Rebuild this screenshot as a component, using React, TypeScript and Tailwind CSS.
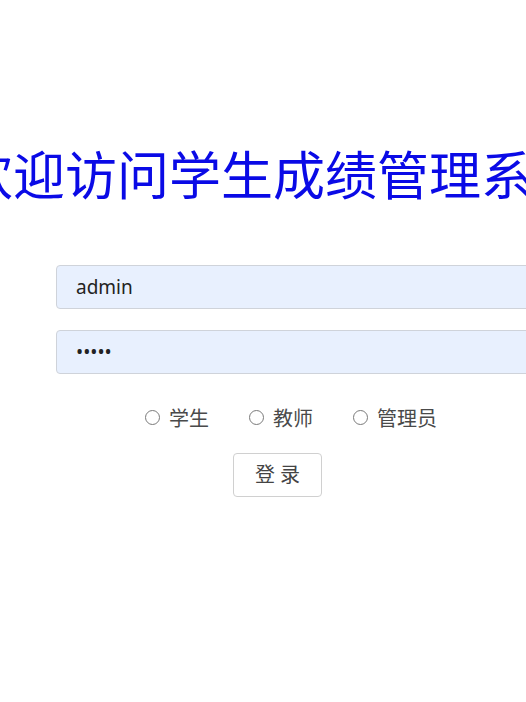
import React from 'react';

const roles = ['学生', '教师', '管理员'];

export default function App() {
  return (
    <div className="w-[526px] h-[702px] overflow-hidden bg-white font-['Noto_Sans','Noto_Sans_CJK_SC',sans-serif]">
      {/* title, wider than the window */}
      <div className="flex justify-center pl-[20px] pt-[149px] whitespace-nowrap">
        <h1 className="text-[52px] leading-[52px] text-[#0a0ae6] shrink-0">欢迎访问学生成绩管理系统</h1>
      </div>

      <form className="flex flex-col mt-[64px]" onSubmit={(e) => e.preventDefault()}>
        <input
          type="text"
          defaultValue="admin"
          className="ml-[56px] w-[520px] h-[44px] shrink-0 rounded-[4px] border border-[#cfd3da] bg-[#e8f0fe] px-[19px] text-[19px] text-[#222] outline-none"
        />
        <input
          type="password"
          defaultValue="admin"
          className="ml-[56px] mt-[21px] w-[520px] h-[44px] shrink-0 rounded-[4px] border border-[#cfd3da] bg-[#e8f0fe] px-[19px] text-[19px] text-[#222] outline-none"
        />

        <div className="flex items-center ml-[145px] mt-[33px] h-[24px] gap-[40px]">
          {roles.map((r) => (
            <label key={r} className="flex items-center gap-[9px] text-[20px] leading-none text-[#4a4a4a]">
              <span className="w-[15px] h-[15px] rounded-full border border-[#7a7a7a] bg-white -mt-[3px]" />
              {r}
            </label>
          ))}
        </div>

        <button
          type="submit"
          className="ml-[233px] mt-[22px] w-[89px] h-[44px] rounded-[4px] border border-[#d0d0d0] bg-white text-[20px] text-[#444]"
        >
          登 录
        </button>
      </form>
    </div>
  );
}
